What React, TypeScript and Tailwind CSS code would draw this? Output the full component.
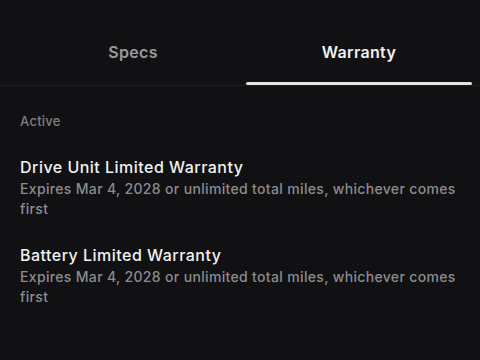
import { useState } from 'react';

const warranties = [
  {
    title: 'Drive Unit Limited Warranty',
    detail: 'Expires Mar 4, 2028 or unlimited total miles, whichever comes first',
  },
  {
    title: 'Battery Limited Warranty',
    detail: 'Expires Mar 4, 2028 or unlimited total miles, whichever comes first',
  },
];

const tabs = ['Specs', 'Warranty'];

export default function App() {
  const [active, setActive] = useState('Warranty');

  return (
    <div className="w-[480px] h-[360px] overflow-hidden bg-[#111113] font-['Inter',sans-serif] antialiased">
      {/* Tabs */}
      <div className="flex pl-5 pr-2 border-b border-[#1e1e21]">
        {tabs.map((tab) => {
          const isActive = tab === active;
          return (
            <button
              key={tab}
              onClick={() => setActive(tab)}
              className={`relative flex-1 h-[85px] pt-[40px] flex justify-center text-[16px] leading-6 font-semibold tracking-[0.02em] ${
                isActive ? 'text-[#f1f1f1]' : 'text-[#9a9a9c]'
              }`}
            >
              {tab}
              {isActive && (
                <span className="absolute left-0 right-0 bottom-0 h-[3px] rounded-sm bg-[#e4e4e4]" />
              )}
            </button>
          );
        })}
      </div>

      {/* Active warranties */}
      <div className="px-5 pt-[25px]">
        <div className="text-[13px] leading-5 font-medium tracking-[0.02em] text-[#7f7f82]">Active</div>
        <div className="flex flex-col gap-[25px] mt-[25px] pr-1">
          {warranties.map((w) => (
            <div key={w.title}>
              <div className="text-[16px] leading-[23px] font-medium tracking-[0.03em] text-[#f2f2f2]">{w.title}</div>
              <div className="text-[14px] leading-5 font-medium tracking-[0.024em] text-[#8c8c8f]">{w.detail}</div>
            </div>
          ))}
        </div>
      </div>
    </div>
  );
}
